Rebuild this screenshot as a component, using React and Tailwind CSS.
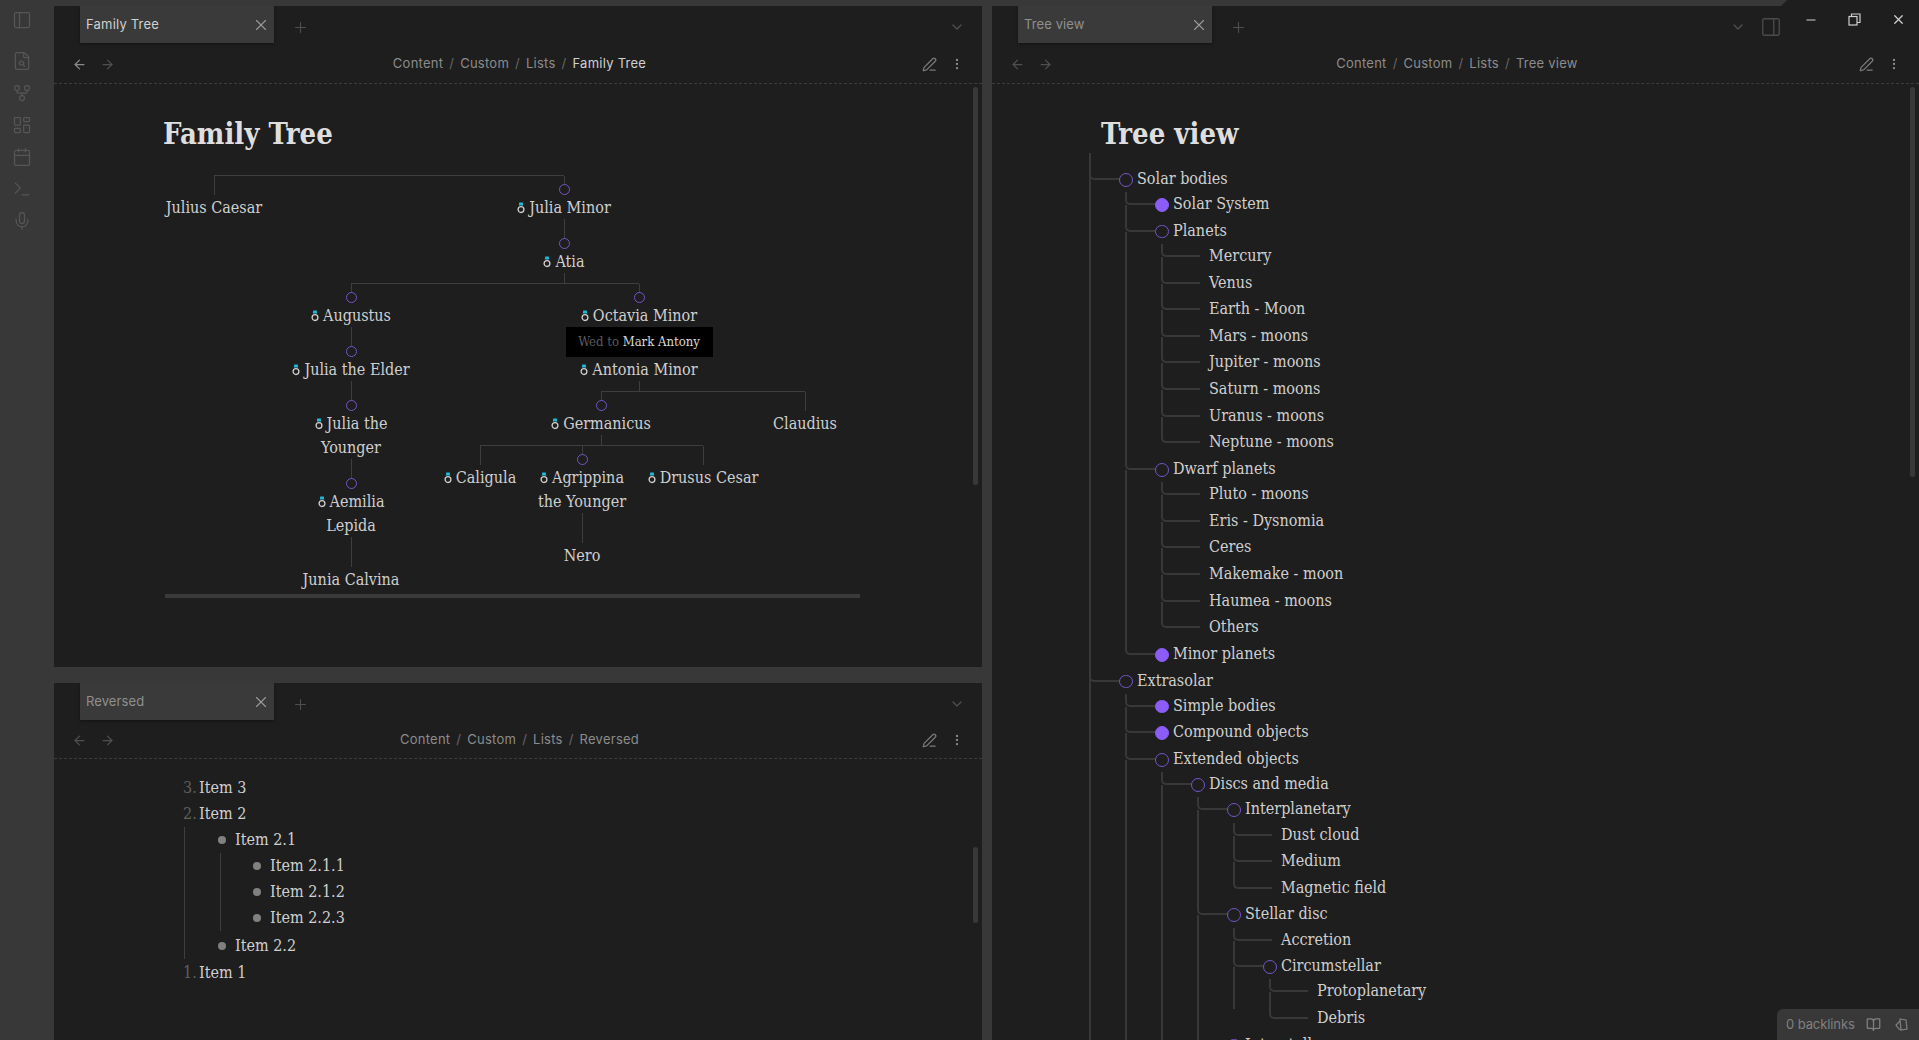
import React from 'react';
import {
  ArrowLeft, ArrowRight, BookOpen, Calendar, ChevronDown, FileSearch, GitFork, LayoutDashboard,
  Mic, Minus, MoreVertical, PanelLeft, PanelRight, PenLine, Plus, Terminal, X,
} from 'lucide-react';

const uiFont = "font-['Inter','Liberation_Sans',sans-serif]";
const serifFont = "font-['DejaVu_Serif','Liberation_Serif',serif] [font-stretch:condensed]";

function RingIcon() {
  return (
    <svg width="8" height="12" viewBox="0 0 8 12" className="mr-[4px] inline-block align-[-1px]">
      <path d="M2.2 0.5h3.6L6.2 3.6H1.8z" fill="#22b8d8" />
      <circle cx="4" cy="7.6" r="2.9" fill="none" stroke="#d0d0d0" strokeWidth="1.3" />
    </svg>
  );
}

function TabBar({ title, active }) {
  return (
    <div className="flex h-[37px] shrink-0 items-start pl-[26px] pr-[17px]">
      <div className="flex h-[37px] w-[194px] items-center justify-between bg-[#3a3a3a] pl-[6px] pr-[4px] shadow-[0_1px_3px_rgba(0,0,0,0.4)]">
        <span className={`text-[13px] ${active ? 'tracking-[0.2px] text-[#d0d0d0]' : 'tracking-[0.1px] text-[#8f8f8f]'} ${uiFont}`}>{title}</span>
        <X size={18} strokeWidth={1.5} className="text-[#9a9a9a]" />
      </div>
      <Plus size={17} strokeWidth={1.5} className="ml-[18px] mt-[13px] text-[#4f4f4f]" />
      <div className="flex-1" />
      <ChevronDown size={16} className="mt-[13px] text-[#4f4f4f]" />
    </div>
  );
}

function NavBar({ path, leaf, bright, back, h }) {
  return (
    <div className={`flex shrink-0 items-center border-b border-dashed border-[#3c3c3c] pl-[18px] pr-[18px] pt-[2px] ${h}`}>
      <ArrowLeft size={15} className={back} />
      <ArrowRight size={15} className="ml-[13px] text-[#4f4f4f]" />
      <div className={`ml-[2px] flex flex-1 justify-center gap-[6px] text-[13px] tracking-[0.25px] text-[#8c8c8c] ${uiFont}`}>
        {path.map((p) => (
          <React.Fragment key={p}>
            <span>{p}</span>
            <span className="text-[#666]">/</span>
          </React.Fragment>
        ))}
        <span className={bright ? 'text-[#d0d0d0]' : 'text-[#8c8c8c]'}>{leaf}</span>
      </div>
      <PenLine size={15} className="text-[#7a7a7a]" />
      <MoreVertical size={14} className="ml-[13px] text-[#8a8a8a]" />
    </div>
  );
}

function Person({ name, ring, circle, pos = 'only', wed, w, children }) {
  return (
    <div className={`flex shrink-0 flex-col items-center ${w}`}>
      {pos !== 'only' && (
        <div className="flex w-full">
          <div className={`flex-1 border-t ${pos === 'first' ? 'border-transparent' : 'border-[#3e3e3e]'}`} />
          <div className={`flex-1 border-t ${pos === 'last' ? 'border-transparent' : 'border-[#3e3e3e]'}`} />
        </div>
      )}
      {!wed && <div className={`w-px bg-[#3e3e3e] ${pos === 'only' ? 'h-5' : 'h-[19px]'}`} />}
      {wed && (
        <div className="-mt-2.5 flex h-[30px] w-[147px] items-center justify-center bg-black text-[13px] text-[#5c5c5c]">
          <span>Wed to <span className="text-[#d8d8d8]">Mark Antony</span></span>
        </div>
      )}
      {circle && <div className="-mt-[11px] h-[11px] w-[11px] rounded-full border-[1.5px] border-[#7455c8] bg-[#1e1e1e]" />}
      <div className="-mb-px whitespace-nowrap pt-px text-center text-[16px] leading-6 text-[#cfcfcf]">
        {ring && <RingIcon />}
        {name}
      </div>
      {children && <div className="h-2.5 w-px bg-[#3e3e3e]" />}
      {children}
    </div>
  );
}

function FamilyTree() {
  return (
    <div className={`-ml-[11px] flex pt-[21px] ${serifFont}`}>
      <Person name="Julius Caesar" pos="first" w="w-[124px]" />
      <Person name="Julia Minor" ring circle pos="last" w="w-[576px]">
        <Person name="Atia" ring circle w="w-[576px]">
          <div className="flex">
            <Person name="Augustus" ring circle pos="first" w="w-[150px]">
              <Person name="Julia the Elder" ring circle w="w-[150px]">
                <Person name={<>Julia the<br />Younger</>} ring circle w="w-[150px]">
                  <Person name={<>Aemilia<br />Lepida</>} ring circle w="w-[150px]">
                    <Person name="Junia Calvina" w="w-[150px]" />
                  </Person>
                </Person>
              </Person>
            </Person>
            <Person name="Octavia Minor" ring circle pos="last" w="w-[426px]">
              <Person name="Antonia Minor" ring wed w="w-[426px]">
                <div className="flex w-[408px]">
                  <Person name="Germanicus" ring circle pos="first" w="w-[332px]">
                    <div className="flex">
                      <Person name="Caligula" ring pos="first" w="w-[92px]" />
                      <Person name={<>Agrippina<br />the Younger</>} ring circle pos="mid" w="w-[112px]">
                        <Person name="Nero" w="w-[112px]" />
                      </Person>
                      <Person name="Drusus Cesar" ring pos="last" w="w-[130px]" />
                    </div>
                  </Person>
                  <Person name="Claudius" pos="last" w="w-[76px]" />
                </div>
              </Person>
            </Person>
          </div>
        </Person>
      </Person>
    </div>
  );
}

function ReversedList() {
  const Row = ({ mark, text }) => (
    <div className="flex h-[26px] items-center text-[16px] text-[#cfcfcf]">
      {mark}
      <span>{text}</span>
    </div>
  );
  const num = (n) => <span className="mr-[4px] w-[12px] text-[#5e5e5e]">{n}.</span>;
  const dot = <span className="ml-[-17px] mr-[9px] h-[8px] w-[8px] rounded-full bg-[#808080]" />;
  return (
    <div className={`pl-[129px] pt-[16px] ${serifFont}`}>
      <Row mark={num(3)} text="Item 3" />
      <Row mark={num(2)} text="Item 2" />
      <div className="mb-[1px] ml-[1px] border-l border-[#3e3e3e] pl-[50px]">
        <Row mark={dot} text="Item 2.1" />
        <div className="-ml-[15px] border-l border-[#3e3e3e] pl-[49px]">
          <Row mark={dot} text="Item 2.1.1" />
          <Row mark={dot} text="Item 2.1.2" />
          <Row mark={dot} text="Item 2.2.3" />
        </div>
        <div className="mt-[2px]">
          <Row mark={dot} text="Item 2.2" />
        </div>
      </div>
      <Row mark={num(1)} text="Item 1" />
    </div>
  );
}

const solarTree = [
  {
    t: 'Solar bodies',
    c: [
      { t: 'Solar System', filled: true },
      {
        t: 'Planets',
        c: ['Mercury', 'Venus', 'Earth - Moon', 'Mars - moons', 'Jupiter - moons', 'Saturn - moons', 'Uranus - moons', 'Neptune - moons'].map((t) => ({ t })),
      },
      {
        t: 'Dwarf planets',
        c: ['Pluto - moons', 'Eris - Dysnomia', 'Ceres', 'Makemake - moon', 'Haumea - moons', 'Others'].map((t) => ({ t })),
      },
      { t: 'Minor planets', filled: true },
    ],
  },
  {
    t: 'Extrasolar',
    open: true,
    c: [
      { t: 'Simple bodies', filled: true },
      { t: 'Compound objects', filled: true },
      {
        t: 'Extended objects',
        open: true,
        c: [
          {
            t: 'Discs and media',
            open: true,
            c: [
              { t: 'Interplanetary', c: [{ t: 'Dust cloud' }, { t: 'Medium' }, { t: 'Magnetic field' }] },
              {
                t: 'Stellar disc',
                c: [
                  { t: 'Accretion' },
                  { t: 'Circumstellar', cut: true, c: [{ t: 'Protoplanetary' }, { t: 'Debris' }] },
                ],
              },
              { t: 'Interstellar', c: [] },
            ],
          },
        ],
      },
    ],
  },
];

function TreeNode({ node, last }) {
  const isLeaf = !node.c && !node.filled;
  return (
    <li className="flex">
      <div className={`flex shrink-0 flex-col ${isLeaf ? 'w-[39px]' : 'w-[30px]'}`}>
        <div className="h-[13px] rounded-bl-[5px] border-b-2 border-l-2 border-[#383838]" />
        {node.cut && <div className="h-[42px] w-[2px] bg-[#383838]" />}
        {!last && <div className="w-[2px] flex-1 bg-[#383838]" />}
      </div>
      <div className="min-w-0">
        <div className="flex h-[26.65px] items-start text-[16px] leading-6 text-[#cfcfcf]">
          {!isLeaf && (
            <span
              className={`mr-[4.5px] mt-[6px] h-[13.5px] w-[13.5px] shrink-0 rounded-full border-[1.5px] ${node.filled ? 'border-[#8b5cf6] bg-[#8b5cf6]' : 'border-[#7455cc]'}`}
            />
          )}
          <span className={isLeaf ? 'ml-[9px]' : ''}>{node.t}</span>
        </div>
        {node.c && (
          <ul className="-mt-[1.5px] ml-[6px]">
            {node.c.map((c, i) => (
              <TreeNode key={c.t} node={c} last={i === node.c.length - 1 && !node.open} />
            ))}
          </ul>
        )}
      </div>
    </li>
  );
}

function Scrollbar({ className }) {
  return <div className={`absolute w-[5px] rounded-sm bg-[#383838] ${className}`} />;
}

export default function App() {
  return (
    <div className="flex h-screen w-full flex-col overflow-hidden bg-[#1e1e1e]">
      <div className="h-[6px] w-[1787px] shrink-0 bg-[#383838] [clip-path:polygon(0_0,100%_0,calc(100%-6px)_100%,0_100%)]" />
      <div className="relative flex min-h-0 flex-1">
        <aside className="-mt-[6px] flex w-[54px] shrink-0 flex-col items-center bg-[#383838] pr-[10px] pt-[10px] text-[#565656]">
          <PanelLeft size={20} strokeWidth={1.5} />
          <FileSearch size={20} strokeWidth={1.5} className="mt-[21px]" />
          <GitFork size={20} strokeWidth={1.5} className="mt-[12px]" />
          <LayoutDashboard size={20} strokeWidth={1.5} className="mt-[12px]" />
          <Calendar size={20} strokeWidth={1.5} className="mt-[12px]" />
          <Terminal size={20} strokeWidth={1.5} className="mt-[12px]" />
          <Mic size={20} strokeWidth={1.5} className="mt-[12px]" />
        </aside>

        <div className="flex w-[928px] shrink-0 flex-col">
          <section className="relative h-[661px] shrink-0 overflow-hidden">
            <TabBar title="Family Tree" active />
            <NavBar path={['Content', 'Custom', 'Lists']} leaf="Family Tree" bright back="text-[#8a8a8a]" h="h-[41px]" />
            <div className="pl-[109px]">
              <h1 className={`mt-[30px] text-[29px] font-bold leading-[40px] text-[#dedede] ${serifFont}`}>Family Tree</h1>
              <FamilyTree />
              <div className="ml-[2px] mt-[3px] h-[4px] w-[695px] bg-[#3a3a3a]" />
            </div>
            <Scrollbar className="right-[4px] top-[81px] h-[398px]" />
          </section>
          <div className="h-[16px] shrink-0 bg-[#383838]" />
          <section className="relative min-h-0 flex-1 overflow-hidden">
            <TabBar title="Reversed" />
            <NavBar path={['Content', 'Custom', 'Lists']} leaf="Reversed" back="text-[#4f4f4f]" h="h-[39px]" />
            <ReversedList />
            <Scrollbar className="right-[4px] top-[164px] h-[76px]" />
          </section>
        </div>

        <div className="-mt-[6px] w-[10px] shrink-0 bg-[#383838]" />

        <section className="relative min-w-0 flex-1 overflow-hidden">
          <div className="pr-[156px]">
            <TabBar title="Tree view" />
          </div>
          <NavBar path={['Content', 'Custom', 'Lists']} leaf="Tree view" back="text-[#4f4f4f]" h="h-[41px]" />
          <div className="pl-[109px]">
            <h1 className={`mt-[30px] text-[29px] font-bold leading-[40px] text-[#dedede] ${serifFont}`}>Tree view</h1>
          </div>
          <div className={`ml-[97px] ${serifFont}`}>
            <ul className="-mt-[1px] pt-[14px] [background:linear-gradient(#383838,#383838)_0_0/2px_100%_no-repeat]">
              {solarTree.map((n) => (
                <TreeNode key={n.t} node={n} last={false} />
              ))}
            </ul>
          </div>
          <Scrollbar className="right-[4px] top-[81px] h-[390px]" />
          <PanelRight size={22} strokeWidth={1.5} className="absolute right-[137px] top-[10px] text-[#4a4a4a]" />
        </section>

        <div className="absolute right-[13px] top-[6px] flex items-center gap-[30px] text-[#cfcfcf]">
          <Minus size={14} />
          <svg width="13" height="13" viewBox="0 0 13 13" fill="none" stroke="currentColor" strokeWidth="1.2">
            <rect x="1" y="3.5" width="8" height="8.5" />
            <path d="M3.5 3.5V1h8.5v8.5H9" />
          </svg>
          <X size={15} />
        </div>

        <div className={`absolute bottom-0 right-0 flex h-[31px] w-[142px] items-center rounded-tl-md bg-[#383838] pl-[9px] text-[13px] tracking-[-0.1px] text-[#808080] ${uiFont}`}>
          <span>0 backlinks</span>
          <BookOpen size={15} className="ml-[11px]" />
          <svg width="15" height="15" viewBox="0 0 15 15" fill="none" stroke="currentColor" strokeWidth="1.2" className="ml-[13px]">
            <path d="M6 2l6 1 1 9-6 1z" />
            <path d="M6 4L2 8l3 4 2 1" />
          </svg>
        </div>
      </div>
    </div>
  );
}
